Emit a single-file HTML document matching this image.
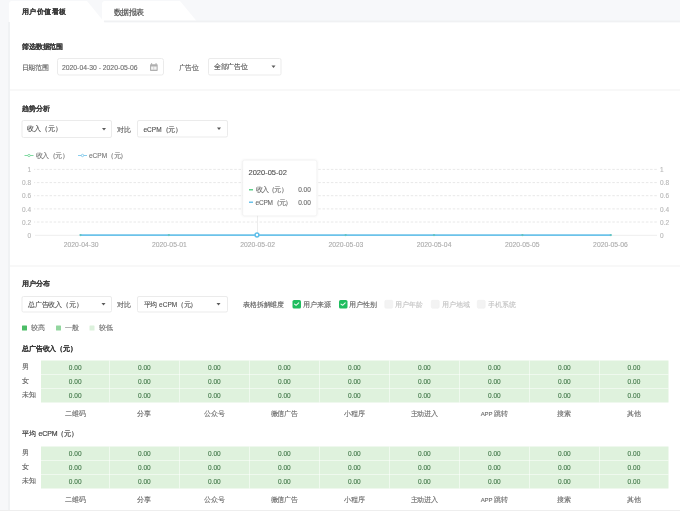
<!DOCTYPE html>
<html><head><meta charset="utf-8"><style>
*{box-sizing:border-box;margin:0;padding:0}
html,body{width:680px;height:511px;overflow:hidden;background:#f7f8fa;font-family:"Liberation Sans",sans-serif;color:#333}
#root{position:absolute;left:0;top:0;width:680px;height:511px;overflow:hidden;filter:blur(0.42px)}
#sc{position:absolute;left:0;top:0;width:1360px;height:1022px;transform:scale(0.5);transform-origin:0 0}
#z{position:absolute;left:0;top:0;width:680px;height:511px;zoom:2}
.a{position:absolute;white-space:nowrap}
#z div{-webkit-text-stroke-width:0.12px}
#z .h{-webkit-text-stroke-width:0.08px}
.h{font-size:7px;line-height:8px;font-weight:bold;color:#3a3a3a;letter-spacing:-0.15px}
.lbl{font-size:7px;line-height:8px;color:#5e5e5e;letter-spacing:-0.15px}
.sel{position:absolute;border:1px solid #ebebeb;border-radius:2px;background:#fff}
.sel .tx{position:absolute;left:6px;top:4px;font-size:7px;line-height:8px;color:#505050;white-space:nowrap}
.sel .ar{position:absolute;top:6px;width:0;height:0;border-left:2px solid transparent;border-right:2px solid transparent;border-top:2.8px solid #5a5a5a}
.sep{position:absolute;left:10px;width:670px;height:1px;background:#f2f2f2}
.yl{position:absolute;font-size:6.5px;line-height:6px;color:#b8b8b8;white-space:nowrap}
.xl{position:absolute;font-size:6.8px;line-height:7px;color:#acacac;white-space:nowrap;width:60px;text-align:center}
.cb{position:absolute;width:8.5px;height:8.3px;border-radius:1.6px}
.cb.on{background:#1ebd5e}
.cb.off{background:#f3f3f3;border:0.5px solid #eeeeee}
.cbt{position:absolute;font-size:7px;line-height:8px;white-space:nowrap;letter-spacing:-0.15px}
.tv{position:absolute;width:70px;text-align:center;font-size:6.5px;line-height:8px;color:#457b4c;white-space:nowrap;-webkit-text-stroke:0.15px #457b4c}
.rl{position:absolute;left:21.5px;font-size:7px;line-height:8px;color:#616161}
.cl{position:absolute;width:70px;text-align:center;font-size:7px;line-height:8px;color:#6c6c6c;white-space:nowrap;letter-spacing:-0.1px}
</style></head><body><div id="root"><div id="sc"><div id="z">
<div class="a" style="left:102px;top:1px;width:95px;height:20.5px;background:#fff;border-radius:3px 0 0 0;clip-path:polygon(0 0,78px 0,95px 100%,0 100%)"></div>
<div class="a" style="left:9px;top:1px;width:96px;height:22px;background:#fff;border-radius:3px 0 0 0;clip-path:polygon(0 0,78px 0,96px 100%,0 100%)"></div>
<div class="a" style="left:104px;top:20.5px;width:576px;height:2px;background:#f0f1f3"></div>
<div class="a" style="left:8px;top:22px;width:2px;height:488px;background:#f0f2f4"></div><div class="a" style="left:10px;top:22.5px;width:670px;height:487.5px;background:#fff"></div>
<div class="a" style="left:0;top:510px;width:680px;height:1px;background:#eee"></div>
<div class="a h" style="left:22px;top:7.4px;font-size:7px;letter-spacing:0.4px;-webkit-text-stroke-width:0.1px;color:#383838">用户价值看板</div>
<div class="a lbl" style="left:114.3px;top:7.8px;font-size:7.5px;color:#4e4e4e;letter-spacing:-0.3px;-webkit-text-stroke-width:0.18px">数据报表</div>
<div class="a h" style="left:22px;top:42.5px">筛选数据范围</div>
<div class="a lbl" style="left:21.5px;top:63.7px">日期范围</div>
<div class="sel" style="left:57px;top:58px;width:106.8px;height:17.5px;border-radius:2.5px"><div class="tx" style="left:4px;top:4.6px;font-size:6.8px;color:#6e6e6e">2020-04-30 - 2020-05-06</div></div>
<svg class="a" style="left:149px;top:62px" width="10" height="10" viewBox="0 0 10 10"><rect x="1" y="2.2" width="7.7" height="6.7" rx="0.7" fill="#b0b0b0"/><rect x="2.1" y="4.5" width="5.5" height="3.2" fill="#f4f4f4"/><rect x="4.6" y="4.5" width="0.5" height="3.2" fill="#bbb"/><rect x="2.2" y="1" width="0.9" height="2" fill="#b0b0b0"/><rect x="6.6" y="1" width="0.9" height="2" fill="#b0b0b0"/></svg>
<div class="a lbl" style="left:178.5px;top:63.7px">广告位</div>
<div class="sel" style="left:208px;top:58px;width:73.5px;height:17.5px"><div class="tx" style="left:4.8px;top:3.6px;letter-spacing:-0.2px">全部广告位</div><div class="ar" style="left:62.400000000000006px;top:6.6px"></div></div>
<div class="sep" style="top:89.3px"></div>
<div class="a h" style="left:22px;top:104.5px">趋势分析</div>
<div class="sel" style="left:21.5px;top:120px;width:90.5px;height:18px"><div class="tx" style="left:4.4px;top:3.6px;">收入（元）</div><div class="ar" style="left:79.5px;top:6.8px"></div></div>
<div class="a lbl" style="left:117px;top:125px">对比</div>
<div class="sel" style="left:137px;top:120px;width:91px;height:17.5px"><div class="tx" style="left:5.5px;top:4px;font-size:6.5px;top:4.3px">eCPM（元）</div><div class="ar" style="left:79.2px;top:6.5px"></div></div>
<svg class="a" style="left:24px;top:152.3px" width="12" height="6"><line x1="0.5" y1="3" x2="9.5" y2="3" stroke="#5fd08a" stroke-width="0.8"/><circle cx="5" cy="3" r="1.2" fill="#fff" stroke="#5fd08a" stroke-width="0.7"/></svg>
<div class="a" style="left:35.5px;top:152px;font-size:6.5px;line-height:8px;color:#777">收入（元）</div>
<svg class="a" style="left:77.6px;top:152.3px" width="12" height="6"><line x1="0.5" y1="3" x2="9.5" y2="3" stroke="#6cc2ea" stroke-width="0.8"/><circle cx="5" cy="3" r="1.2" fill="#fff" stroke="#6cc2ea" stroke-width="0.7"/></svg>
<div class="a" style="left:89px;top:152px;font-size:6.5px;line-height:8px;color:#777">eCPM（元）</div>
<div class="yl" style="left:17px;width:14px;text-align:right;top:166.90px">1</div>
<div class="yl" style="left:660px;top:166.90px">1</div>
<div class="yl" style="left:17px;width:14px;text-align:right;top:180.10px">0.8</div>
<div class="yl" style="left:660px;top:180.10px">0.8</div>
<div class="yl" style="left:17px;width:14px;text-align:right;top:193.20px">0.6</div>
<div class="yl" style="left:660px;top:193.20px">0.6</div>
<div class="yl" style="left:17px;width:14px;text-align:right;top:206.40px">0.4</div>
<div class="yl" style="left:660px;top:206.40px">0.4</div>
<div class="yl" style="left:17px;width:14px;text-align:right;top:219.50px">0.2</div>
<div class="yl" style="left:660px;top:219.50px">0.2</div>
<div class="yl" style="left:17px;width:14px;text-align:right;top:232.50px">0</div>
<div class="yl" style="left:660px;top:232.50px">0</div>
<svg class="a" style="left:0;top:0" width="680" height="260"><line x1="34" y1="169.40" x2="657" y2="169.40" stroke="#e0e0e0" stroke-width="0.75" stroke-dasharray="2.5 1.7" stroke-dashoffset="1.3"/><line x1="34" y1="182.60" x2="657" y2="182.60" stroke="#e0e0e0" stroke-width="0.75" stroke-dasharray="2.5 1.7" stroke-dashoffset="1.3"/><line x1="34" y1="195.70" x2="657" y2="195.70" stroke="#e0e0e0" stroke-width="0.75" stroke-dasharray="2.5 1.7" stroke-dashoffset="1.3"/><line x1="34" y1="208.90" x2="657" y2="208.90" stroke="#e0e0e0" stroke-width="0.75" stroke-dasharray="2.5 1.7" stroke-dashoffset="1.3"/><line x1="34" y1="222.00" x2="657" y2="222.00" stroke="#e0e0e0" stroke-width="0.75" stroke-dasharray="2.5 1.7" stroke-dashoffset="1.3"/><line x1="35" y1="235.3" x2="657" y2="235.3" stroke="#eeeeee" stroke-width="1"/><line x1="80.2" y1="235.1" x2="610.8" y2="235.1" stroke="#6cc3ea" stroke-width="1.7"/><circle cx="80.50" cy="235.1" r="1.15" fill="#62c4c4"/><circle cx="168.88" cy="235.1" r="1.15" fill="#62c4c4"/><circle cx="257.27" cy="235.1" r="1.15" fill="#62c4c4"/><circle cx="345.65" cy="235.1" r="1.15" fill="#62c4c4"/><circle cx="434.03" cy="235.1" r="1.15" fill="#62c4c4"/><circle cx="522.42" cy="235.1" r="1.15" fill="#62c4c4"/><circle cx="610.80" cy="235.1" r="1.15" fill="#62c4c4"/></svg>
<div class="xl" style="left:51.15px;top:241px">2020-04-30</div>
<div class="xl" style="left:139.38px;top:241px">2020-05-01</div>
<div class="xl" style="left:227.60px;top:241px">2020-05-02</div>
<div class="xl" style="left:315.83px;top:241px">2020-05-03</div>
<div class="xl" style="left:404.05px;top:241px">2020-05-04</div>
<div class="xl" style="left:492.27px;top:241px">2020-05-05</div>
<div class="xl" style="left:580.50px;top:241px">2020-05-06</div>
<div class="a" style="left:257px;top:215px;width:0.9px;height:18px;background:#ededed"></div>
<svg class="a" style="left:253.5px;top:231.6px" width="7" height="7"><circle cx="3.5" cy="3.5" r="1.9" fill="#fff" stroke="#62c0ea" stroke-width="1.5"/></svg>
<div class="a" style="left:242.5px;top:160.2px;width:74.3px;height:55.6px;background:#fff;border:0.5px solid #eee;border-radius:2px;box-shadow:0 0 3px rgba(0,0,0,0.08)"></div>
<div class="a" style="left:248.5px;top:168px;font-size:7.5px;line-height:9px;color:#525252">2020-05-02</div>
<div class="a" style="left:249px;top:188.8px;width:3.8px;height:1.5px;background:#5fd08a"></div>
<div class="a" style="left:255.5px;top:185.5px;font-size:6.5px;line-height:8px;color:#6e6e6e;letter-spacing:-0.2px">收入（元）</div>
<div class="a" style="left:298.2px;top:185.5px;font-size:6.5px;line-height:8px;color:#6e6e6e">0.00</div>
<div class="a" style="left:249px;top:201.6px;width:3.8px;height:1.5px;background:#6cc2ea"></div>
<div class="a" style="left:255.5px;top:198.5px;font-size:6.5px;line-height:8px;color:#6e6e6e;letter-spacing:-0.2px">eCPM（元）</div>
<div class="a" style="left:298.2px;top:198.5px;font-size:6.5px;line-height:8px;color:#6e6e6e">0.00</div>
<div class="sep" style="top:265.3px"></div>
<div class="a h" style="left:22px;top:279.5px">用户分布</div>
<div class="sel" style="left:21.5px;top:296.2px;width:90.3px;height:16.2px"><div class="tx" style="left:5.5px;top:3.3px;letter-spacing:-0.2px">总广告收入（元）</div><div class="ar" style="left:79.2px;top:5.8px"></div></div>
<div class="a lbl" style="left:117px;top:300.5px">对比</div>
<div class="sel" style="left:137px;top:296px;width:91px;height:16.4px"><div class="tx" style="left:5.5px;top:3.5px;font-size:6.5px;top:3.8px">平均<span style="margin-left:0.8px"> </span>eCPM（元）</div><div class="ar" style="left:78.7px;top:6.0px"></div></div>
<div class="a lbl" style="left:243px;top:300.5px">表格拆解维度</div>
<div class="cb on" style="left:292.4px;top:300.2px"><svg width="9" height="9" style="position:absolute;left:0;top:0"><path d="M2 4.1 L3.6 5.3 L6.2 2.8" fill="none" stroke="#e6f8ec" stroke-width="1.1" stroke-linecap="round" stroke-linejoin="round"/></svg></div>
<div class="cbt" style="left:303px;top:300.5px;color:#666">用户来源</div>
<div class="cb on" style="left:338.8px;top:300.2px"><svg width="9" height="9" style="position:absolute;left:0;top:0"><path d="M2 4.1 L3.6 5.3 L6.2 2.8" fill="none" stroke="#e6f8ec" stroke-width="1.1" stroke-linecap="round" stroke-linejoin="round"/></svg></div>
<div class="cbt" style="left:349.4px;top:300.5px;color:#666">用户性别</div>
<div class="cb off" style="left:384.7px;top:300.2px"></div>
<div class="cbt" style="left:395.4px;top:300.5px;color:#c4c4c4">用户年龄</div>
<div class="cb off" style="left:431.2px;top:300.2px"></div>
<div class="cbt" style="left:442px;top:300.5px;color:#c4c4c4">用户地域</div>
<div class="cb off" style="left:477.2px;top:300.2px"></div>
<div class="cbt" style="left:488.2px;top:300.5px;color:#c4c4c4">手机系统</div>
<div class="a" style="left:22px;top:325.6px;width:5px;height:5px;background:#4cbd67;border-radius:0.5px"></div>
<div class="a" style="left:31px;top:323.6px;font-size:7px;line-height:8px;color:#707070">较高</div>
<div class="a" style="left:56px;top:325.6px;width:5px;height:5px;background:#93d69f;border-radius:0.5px"></div>
<div class="a" style="left:65px;top:323.6px;font-size:7px;line-height:8px;color:#707070">一般</div>
<div class="a" style="left:89.5px;top:325.6px;width:5px;height:5px;background:#dcf1dc;border-radius:0.5px"></div>
<div class="a" style="left:98.5px;top:323.6px;font-size:7px;line-height:8px;color:#707070">较低</div>
<div class="a h" style="left:22px;top:344px;">总广告收入（元）</div>
<div class="rl" style="top:362.40px">男</div>
<div class="rl" style="top:376.45px">女</div>
<div class="rl" style="top:390.50px">未知</div>
<div class="a" style="left:41.0px;top:360.6px;width:627.5px;height:42.0px;background:#dff2dd"></div>
<div class="a" style="left:108.90px;top:360.6px;width:1px;height:42.0px;background:rgba(255,255,255,0.5)"></div>
<div class="a" style="left:178.90px;top:360.6px;width:1px;height:42.0px;background:rgba(255,255,255,0.5)"></div>
<div class="a" style="left:248.90px;top:360.6px;width:1px;height:42.0px;background:rgba(255,255,255,0.5)"></div>
<div class="a" style="left:318.90px;top:360.6px;width:1px;height:42.0px;background:rgba(255,255,255,0.5)"></div>
<div class="a" style="left:388.90px;top:360.6px;width:1px;height:42.0px;background:rgba(255,255,255,0.5)"></div>
<div class="a" style="left:458.90px;top:360.6px;width:1px;height:42.0px;background:rgba(255,255,255,0.5)"></div>
<div class="a" style="left:528.90px;top:360.6px;width:1px;height:42.0px;background:rgba(255,255,255,0.5)"></div>
<div class="a" style="left:598.90px;top:360.6px;width:1px;height:42.0px;background:rgba(255,255,255,0.5)"></div>
<div class="a" style="left:41.0px;top:374.10px;width:627.5px;height:1px;background:rgba(255,255,255,0.5)"></div>
<div class="a" style="left:41.0px;top:388.10px;width:627.5px;height:1px;background:rgba(255,255,255,0.5)"></div>
<div class="tv" style="left:40.20px;top:363.60px">0.00</div>
<div class="tv" style="left:40.20px;top:377.60px">0.00</div>
<div class="tv" style="left:40.20px;top:391.60px">0.00</div>
<div class="cl" style="left:40.20px;top:409.10px">二维码</div>
<div class="tv" style="left:109.40px;top:363.60px">0.00</div>
<div class="tv" style="left:109.40px;top:377.60px">0.00</div>
<div class="tv" style="left:109.40px;top:391.60px">0.00</div>
<div class="cl" style="left:109.40px;top:409.10px">分享</div>
<div class="tv" style="left:179.40px;top:363.60px">0.00</div>
<div class="tv" style="left:179.40px;top:377.60px">0.00</div>
<div class="tv" style="left:179.40px;top:391.60px">0.00</div>
<div class="cl" style="left:179.40px;top:409.10px">公众号</div>
<div class="tv" style="left:249.40px;top:363.60px">0.00</div>
<div class="tv" style="left:249.40px;top:377.60px">0.00</div>
<div class="tv" style="left:249.40px;top:391.60px">0.00</div>
<div class="cl" style="left:249.40px;top:409.10px">微信广告</div>
<div class="tv" style="left:319.40px;top:363.60px">0.00</div>
<div class="tv" style="left:319.40px;top:377.60px">0.00</div>
<div class="tv" style="left:319.40px;top:391.60px">0.00</div>
<div class="cl" style="left:319.40px;top:409.10px">小程序</div>
<div class="tv" style="left:389.40px;top:363.60px">0.00</div>
<div class="tv" style="left:389.40px;top:377.60px">0.00</div>
<div class="tv" style="left:389.40px;top:391.60px">0.00</div>
<div class="cl" style="left:389.40px;top:409.10px">主动进入</div>
<div class="tv" style="left:459.40px;top:363.60px">0.00</div>
<div class="tv" style="left:459.40px;top:377.60px">0.00</div>
<div class="tv" style="left:459.40px;top:391.60px">0.00</div>
<div class="cl" style="left:459.40px;top:409.10px"><span style="font-size:6px">APP</span> 跳转</div>
<div class="tv" style="left:529.40px;top:363.60px">0.00</div>
<div class="tv" style="left:529.40px;top:377.60px">0.00</div>
<div class="tv" style="left:529.40px;top:391.60px">0.00</div>
<div class="cl" style="left:529.40px;top:409.10px">搜索</div>
<div class="tv" style="left:598.95px;top:363.60px">0.00</div>
<div class="tv" style="left:598.95px;top:377.60px">0.00</div>
<div class="tv" style="left:598.95px;top:391.60px">0.00</div>
<div class="cl" style="left:598.95px;top:409.10px">其他</div>
<div class="a h" style="left:22px;top:429.5px;font-weight:normal;-webkit-text-stroke:0.2px #444;color:#444;">平均<span style="margin-left:1px"> </span>eCPM（元）</div>
<div class="rl" style="top:448.40px">男</div>
<div class="rl" style="top:462.45px">女</div>
<div class="rl" style="top:476.50px">未知</div>
<div class="a" style="left:41.0px;top:446.6px;width:627.5px;height:42.0px;background:#dff2dd"></div>
<div class="a" style="left:108.90px;top:446.6px;width:1px;height:42.0px;background:rgba(255,255,255,0.5)"></div>
<div class="a" style="left:178.90px;top:446.6px;width:1px;height:42.0px;background:rgba(255,255,255,0.5)"></div>
<div class="a" style="left:248.90px;top:446.6px;width:1px;height:42.0px;background:rgba(255,255,255,0.5)"></div>
<div class="a" style="left:318.90px;top:446.6px;width:1px;height:42.0px;background:rgba(255,255,255,0.5)"></div>
<div class="a" style="left:388.90px;top:446.6px;width:1px;height:42.0px;background:rgba(255,255,255,0.5)"></div>
<div class="a" style="left:458.90px;top:446.6px;width:1px;height:42.0px;background:rgba(255,255,255,0.5)"></div>
<div class="a" style="left:528.90px;top:446.6px;width:1px;height:42.0px;background:rgba(255,255,255,0.5)"></div>
<div class="a" style="left:598.90px;top:446.6px;width:1px;height:42.0px;background:rgba(255,255,255,0.5)"></div>
<div class="a" style="left:41.0px;top:460.10px;width:627.5px;height:1px;background:rgba(255,255,255,0.5)"></div>
<div class="a" style="left:41.0px;top:474.10px;width:627.5px;height:1px;background:rgba(255,255,255,0.5)"></div>
<div class="tv" style="left:40.20px;top:449.60px">0.00</div>
<div class="tv" style="left:40.20px;top:463.60px">0.00</div>
<div class="tv" style="left:40.20px;top:477.60px">0.00</div>
<div class="cl" style="left:40.20px;top:495.10px">二维码</div>
<div class="tv" style="left:109.40px;top:449.60px">0.00</div>
<div class="tv" style="left:109.40px;top:463.60px">0.00</div>
<div class="tv" style="left:109.40px;top:477.60px">0.00</div>
<div class="cl" style="left:109.40px;top:495.10px">分享</div>
<div class="tv" style="left:179.40px;top:449.60px">0.00</div>
<div class="tv" style="left:179.40px;top:463.60px">0.00</div>
<div class="tv" style="left:179.40px;top:477.60px">0.00</div>
<div class="cl" style="left:179.40px;top:495.10px">公众号</div>
<div class="tv" style="left:249.40px;top:449.60px">0.00</div>
<div class="tv" style="left:249.40px;top:463.60px">0.00</div>
<div class="tv" style="left:249.40px;top:477.60px">0.00</div>
<div class="cl" style="left:249.40px;top:495.10px">微信广告</div>
<div class="tv" style="left:319.40px;top:449.60px">0.00</div>
<div class="tv" style="left:319.40px;top:463.60px">0.00</div>
<div class="tv" style="left:319.40px;top:477.60px">0.00</div>
<div class="cl" style="left:319.40px;top:495.10px">小程序</div>
<div class="tv" style="left:389.40px;top:449.60px">0.00</div>
<div class="tv" style="left:389.40px;top:463.60px">0.00</div>
<div class="tv" style="left:389.40px;top:477.60px">0.00</div>
<div class="cl" style="left:389.40px;top:495.10px">主动进入</div>
<div class="tv" style="left:459.40px;top:449.60px">0.00</div>
<div class="tv" style="left:459.40px;top:463.60px">0.00</div>
<div class="tv" style="left:459.40px;top:477.60px">0.00</div>
<div class="cl" style="left:459.40px;top:495.10px"><span style="font-size:6px">APP</span> 跳转</div>
<div class="tv" style="left:529.40px;top:449.60px">0.00</div>
<div class="tv" style="left:529.40px;top:463.60px">0.00</div>
<div class="tv" style="left:529.40px;top:477.60px">0.00</div>
<div class="cl" style="left:529.40px;top:495.10px">搜索</div>
<div class="tv" style="left:598.95px;top:449.60px">0.00</div>
<div class="tv" style="left:598.95px;top:463.60px">0.00</div>
<div class="tv" style="left:598.95px;top:477.60px">0.00</div>
<div class="cl" style="left:598.95px;top:495.10px">其他</div>
</div></div></div></body></html>
